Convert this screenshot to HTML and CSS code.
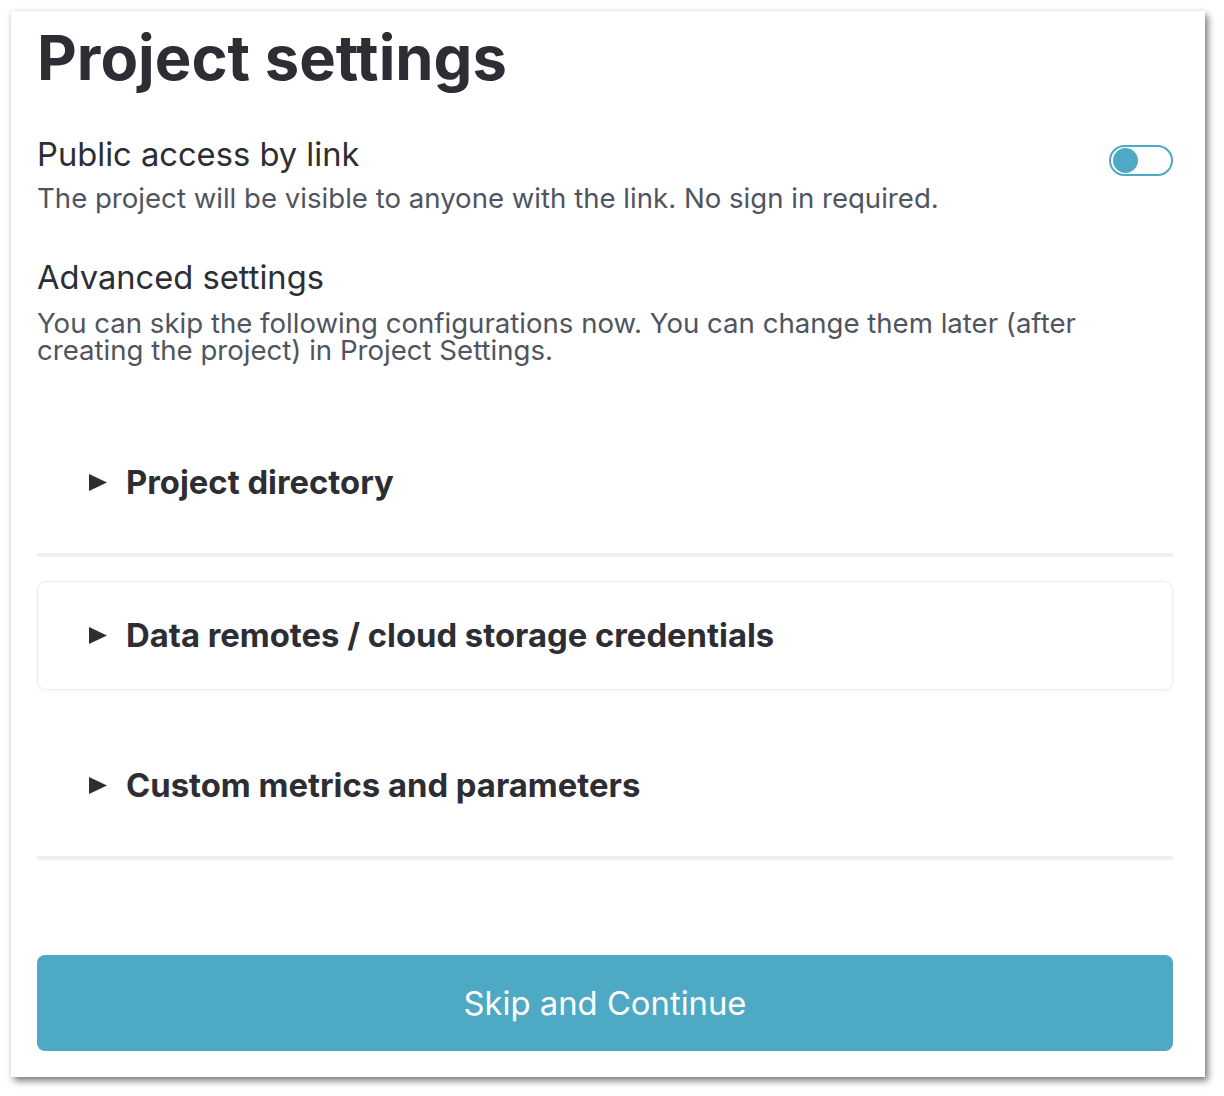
FILE: index.html
```html
<!DOCTYPE html>
<html lang="en">
<head>
<meta charset="utf-8">
<title>Project settings</title>
<link rel="stylesheet" href="styles.css">
</head>
<body>
<div class="card">
  <h1 class="title">Project settings</h1>
  <div class="row">
    <div class="row-text">
      <div class="label">Public access by link</div>
      <div class="desc">The project will be visible to anyone with the link. No sign in required.</div>
    </div>
    <span class="toggle"><span class="knob"></span></span>
  </div>
  <div class="label label-adv">Advanced settings</div>
  <div class="desc desc-tight">You can skip the following configurations now. You can change them later (after creating the project) in Project Settings.</div>
  <div class="accordion">
    <div class="acc-item">
      <svg class="caret" width="18" height="17" viewBox="0 0 18 17"><polygon points="0,0 18,8.5 0,17" fill="#2d2e34"/></svg>
      <span class="acc-title">Project directory</span>
    </div>
    <div class="acc-item acc-boxed">
      <svg class="caret" width="18" height="17" viewBox="0 0 18 17"><polygon points="0,0 18,8.5 0,17" fill="#2d2e34"/></svg>
      <span class="acc-title">Data remotes / cloud storage credentials</span>
    </div>
    <div class="acc-item">
      <svg class="caret" width="18" height="17" viewBox="0 0 18 17"><polygon points="0,0 18,8.5 0,17" fill="#2d2e34"/></svg>
      <span class="acc-title">Custom metrics and parameters</span>
    </div>
  </div>
  <button class="btn" type="button">Skip and Continue</button>
</div>
</body>
</html>
```

FILE: styles.css
```css
* { box-sizing: border-box; }
html, body { margin: 0; padding: 0; background: #ffffff; }
body { font-family: Inter, "Noto Sans", sans-serif; color: #2d2e34; min-height: 1096px; }

.card {
  margin: 11px 0 0 11px;
  width: 1194px;
  height: 1066px;
  background: #ffffff;
  padding: 11px 32px 26px 26px;
  box-shadow: 3px 4px 7px rgba(0, 0, 0, 0.5), 0 0 4px rgba(0, 0, 0, 0.08);
  display: flex;
  flex-direction: column;
}

.title {
  margin: 0;
  font-size: 61.5px;
  line-height: 72px;
  font-weight: 700;
  color: #2d2e34;
}

.row {
  display: flex;
  justify-content: space-between;
  align-items: flex-start;
  margin-top: 40px;
}

.label {
  font-size: 32.7px;
  line-height: 40px;
  font-weight: 400;
  color: #2d2e34;
}

.desc {
  font-size: 27.6px;
  line-height: 36px;
  color: #50545f;
  margin-top: 6px;
}

.label-adv { margin-top: 41px; }
.desc-tight { line-height: 27px; margin-top: 13px; }

.toggle {
  margin-top: 11px;
  width: 64px;
  height: 31px;
  border: 2px solid #4ea9c4;
  border-radius: 16px;
  padding: 2px;
  display: flex;
  align-items: center;
  flex-shrink: 0;
}
.knob {
  width: 25px;
  height: 25px;
  border-radius: 50%;
  background: #4ea9c4;
}

.accordion {
  margin-top: 47px;
  display: flex;
  flex-direction: column;
}

.acc-item {
  display: flex;
  align-items: center;
  padding: 51px 0 51px 52px;
  border-bottom: 4px solid #f0f0f2;
}
.acc-boxed {
  margin: 24px 0;
  padding: 33px 0 34px 51px;
  border: 1px solid #ececef;
  border-radius: 9px;
  box-shadow: 0 1px 3px rgba(0, 0, 0, 0.05);
}
.caret { flex-shrink: 0; margin-right: 19px; }
.acc-title {
  font-size: 32.8px;
  line-height: 40px;
  font-weight: 700;
  color: #2d2e34;
}

.btn {
  margin-top: auto;
  height: 96px;
  width: 100%;
  border: none;
  border-radius: 8px;
  background: #4ea9c4;
  color: #ffffff;
  font-family: Inter, "Noto Sans", sans-serif;
  font-size: 32.8px;
  font-weight: 400;
}
```
